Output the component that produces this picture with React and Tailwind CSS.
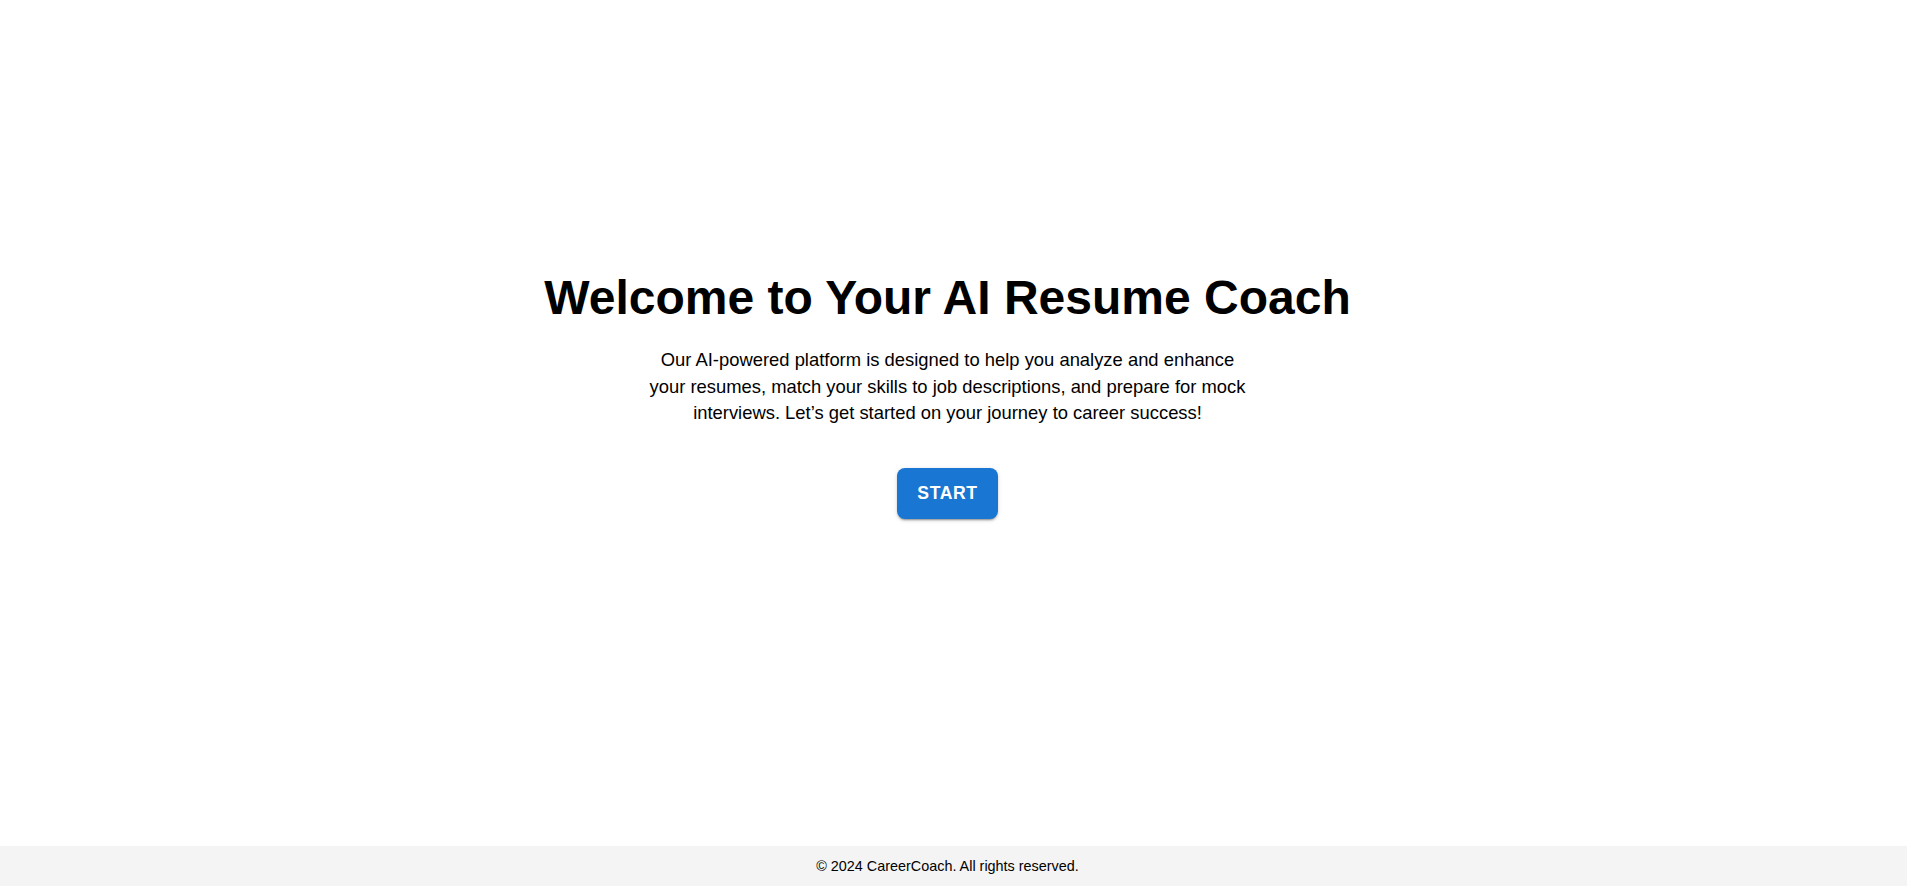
export default function App() {
  return (
    <div className="min-h-screen flex flex-col bg-white text-black font-['Liberation_Sans',Arial,sans-serif]">
      {/* Hero */}
      <main className="flex-1 flex flex-col items-center pt-[270px] pl-4 pr-[28px]">
        <h1 className="text-[48px] leading-[56px] font-bold text-center">
          Welcome to Your AI Resume Coach
        </h1>
        <p className="mt-[21px] max-w-[600px] text-center text-[18.4px] leading-[26.6px]">
          Our AI-powered platform is designed to help you analyze and enhance
          your resumes, match your skills to job descriptions, and prepare for
          mock interviews. Let’s get started on your journey to career success!
        </p>
        <button className="mt-[41px] h-[51px] px-[20px] rounded-[8px] bg-[#1976d2] text-white text-[17.6px] font-bold tracking-[0.6px] uppercase shadow-[0_3px_1px_-2px_rgba(0,0,0,0.2),0_2px_2px_0_rgba(0,0,0,0.14),0_1px_5px_0_rgba(0,0,0,0.12)] hover:bg-[#1565c0]">
          Start
        </button>
      </main>

      {/* Footer */}
      <footer className="bg-[#f4f4f4] py-2.5 pr-[12px] text-center text-[14.4px] leading-5">
        © 2024 CareerCoach. All rights reserved.
      </footer>
    </div>
  );
}
